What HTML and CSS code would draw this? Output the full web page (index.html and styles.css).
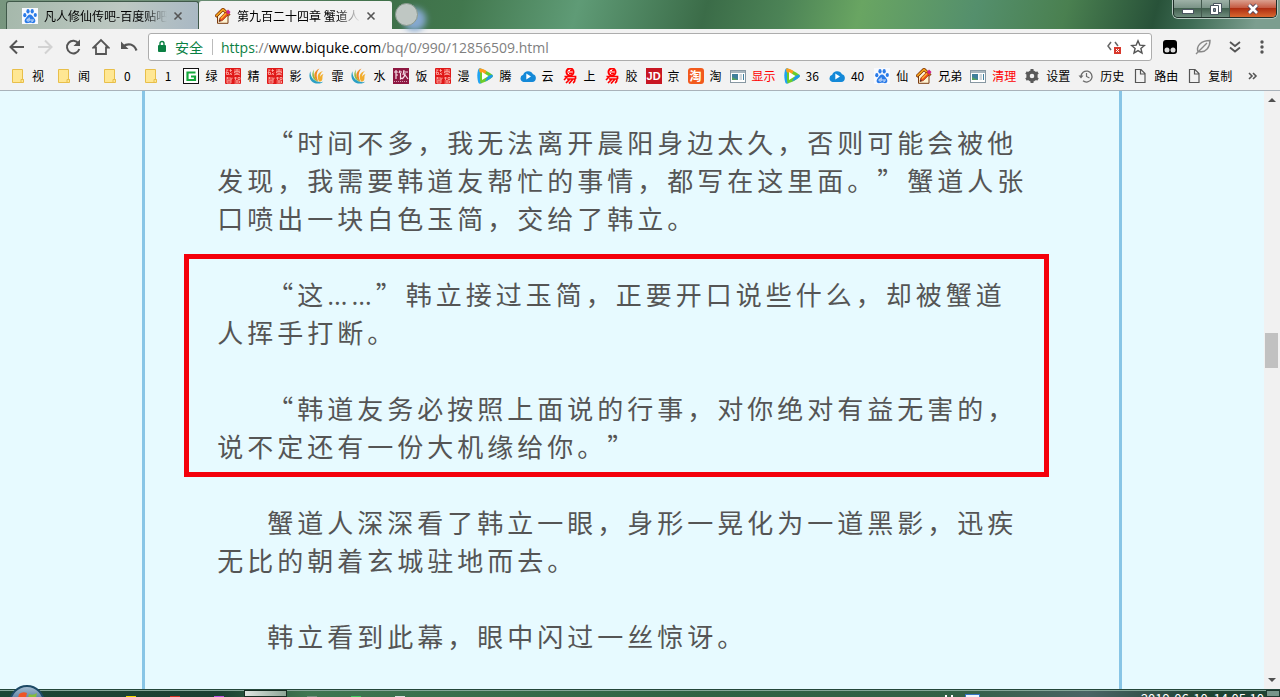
FILE: index.html
```
<!DOCTYPE html>
<html lang="zh-CN">
<head>
  <meta charset="UTF-8">
  <meta name="viewport" content="width=device-width, initial-scale=1.0">
  <title>第九百二十四章 蟹道人</title>
  <link rel="stylesheet" href="styles.css">
</head>
<body>
  <!-- Shared icons -->
  <svg class="sprite" width="0" height="0" aria-hidden="true">
    <symbol id="paw" viewBox="0 0 16 16">
      <rect width="16" height="16" fill="#f8faff"/>
      <g fill="#2a7be8">
        <ellipse cx="2.8" cy="7.2" rx="1.6" ry="2.1"/>
        <ellipse cx="6" cy="3.2" rx="1.6" ry="2.3"/>
        <ellipse cx="10.2" cy="3.2" rx="1.6" ry="2.3"/>
        <ellipse cx="13.3" cy="7" rx="1.6" ry="2.1"/>
        <path d="M8 6.6c2 0 2.6 2 4.200 3.600 2 2 1.300 5-1.200 5-1.200 0-1.800-.4-3-.4s-1.800.4-3 .4c-2.500 0-3.200-3-1.200-5C5.400 8.600 6 6.600 8 6.600z"/>
      </g>
      <path d="M7.200 9.500v3.600H5.900a1 1 0 0 1 0-2h1.300M9 11v1.500q0 .7.700.7H11V11" fill="none" stroke="#fff" stroke-width=".8"/>
    </symbol>
    <symbol id="house" viewBox="0 0 16 16">
      <path d="M2.500 8v7.300h10.500V7L8 2.500z" fill="#fff3d0" stroke="#7a3b10"/>
      <path d="M.5 8.700 8 1.200l6.500 6.300" fill="none" stroke="#7a2c08" stroke-width="3"/>
      <path d="M1 8.200 8 1.500l6 5.700" fill="none" stroke="#f5a51c" stroke-width="1.700"/>
      <path d="m4 13.500.8-3.500 6-6 2.600 2.600-6 6z" fill="#e8501a" stroke="#8c1c08" stroke-width=".6"/>
      <path d="m6 10.500 5-5" stroke="#ffb52c" stroke-width="1.200"/>
      <path d="m11 4 2-2.500L15.500 4l-2 2.500z" fill="#d0208c"/>
      <path d="m4 13.500.5-2 1.500 1.500z" fill="#333"/>
    </symbol>
    <symbol id="folder" viewBox="0 0 16 16">
      <path d="M2.500 1.500h10V11l1 .5v3h-11z" fill="#ffe793" stroke="#e8bf4a"/>
      <path d="M11 14.500v-3h2.500" fill="none" stroke="#e8bf4a"/>
    </symbol>
    <symbol id="green" viewBox="0 0 16 16">
      <rect x=".5" y=".5" width="15" height="15" fill="#fff" stroke="#111"/>
      <path d="M12.500 4.500h-8v7.500h7.500V8.500H8" fill="none" stroke="#16a83c" stroke-width="2.200"/>
    </symbol>
    <symbol id="seal" viewBox="0 0 16 16">
      <rect width="16" height="16" rx="1" fill="#e01818"/>
      <path d="M1 2h2.500M2.500 2 1 5M1.500 4.500h2v2h-2zM4.500 2.500h2.500M5.500 1v3M4.500 7 7 4.500M5 5l2 2M9 2h6M12 1v2M9.500 3.500h5v1.500h-5zM12 5v2M9 7l3-1 3 1M1 10h3M2.500 9v2M1 12h6M5 9v2h2V9.500M2 13h4v2H2zM9 10h3M10.500 9v3M13 9.500h2v2h-2zM9.500 13h5v2h-5M12 12v3" fill="none" stroke="#ffb4ac" stroke-width=".8"/>
    </symbol>
    <symbol id="swirl" viewBox="0 0 16 16">
      <path d="M1.500 3C-1.500 9 2 16 9.500 15.600c2 0 3.500-.8 4.500-1.800C7 15.500 1 10.500 1.500 3z" fill="#2b9fc4"/>
      <path d="M5 1.500C1.500 6.500 3.500 12.500 9.500 14 5.500 10.500 4 6.500 5 1.500z" fill="#91bd45"/>
      <path d="M10.500.5C3.500 3.500 4 10.500 9.500 13.500 7 9 7 4.500 10.500.5z" fill="#f08a22"/>
      <path d="M14 3c-6 1.500-6.500 7-3.500 10.800C15.500 12.500 12 9 14.500 6c-2 .5-3 1.500-3.500 3 0-2.500 1-4.500 3-6z" fill="#f1ad2e"/>
    </symbol>
    <symbol id="meal" viewBox="0 0 16 16">
      <rect width="16" height="16" fill="#8e1741"/>
      <path d="M1 4h4M3 2v9M3 7h2M7 2.500 6 5M6.500 4H9M7.500 5v6l1.500-1M11 2l-1 5M10 4h5M12 5q0 4-3 6M12 7l3 4" fill="none" stroke="#f7dfe7" stroke-width="1.200"/>
      <path d="M1 13.500h14" stroke="#d39bb0" stroke-dasharray="1 1"/>
    </symbol>
    <symbol id="play" viewBox="0 0 16 16">
      <path d="M1.500 1C-.2 5 0 11 1.500 15c.7 1 1.800.9 3 .3L8 8 4.500.7C3.300 0 2.200 0 1.500 1z" fill="#21a4f1"/>
      <path d="M3 .4C8 2 12 4 15 6.500c1.200 1 1.200 2 0 3-3 2.500-6.500 4.600-11.500 6.100L3 12z" fill="#6ccd29"/>
      <path d="M8 13.500c3-1.200 5.500-2.700 7.500-4.500.6-1 .4-1.700-.5-2.500L11 8z" fill="#1e9bea"/>
      <path d="M2 .8C4 0 7 1.500 9.500 3L8 6 2.500 4z" fill="#ff9d1e"/>
      <path d="M5 4v8l6.500-4z" fill="#fff"/>
    </symbol>
    <symbol id="cloud" viewBox="0 0 16 16">
      <path d="M3.500 14a3.700 3.700 0 0 1-.3-7.200A5.300 5.300 0 0 1 13 6.200 4 4 0 0 1 12.300 14z" fill="#1489d8"/>
      <path d="M6.300 5.500v6L11 8.500z" fill="#fff"/>
    </symbol>
    <symbol id="yi" viewBox="0 0 16 16">
      <circle cx="8" cy="4" r="3.500" fill="#fff" stroke="#f00" stroke-width="2"/>
      <path d="M6 4h4M8 2.500h2M7 5.500h3" stroke="#f00"/>
      <path d="M2.500 8.500h11v2.500M6 8 2 12M5 11h8q0 3-2 4M8 11l-4 4M11 11l-4 4.500" fill="none" stroke="#f00" stroke-width="1.700"/>
    </symbol>
    <symbol id="window" viewBox="0 0 16 16">
      <rect x=".5" y="2.500" width="15" height="12" fill="#fff" stroke="#8797a2"/>
      <path d="M1 4h14" stroke="#a9b7bf" stroke-width="2"/>
      <rect x="2" y="6" width="6" height="6" fill="#3f7f9c"/>
      <path d="M2 12V9l6 3z" fill="#54a061"/>
      <path d="M9.500 7h2.500M9.500 9h2.500M9.500 11h2.500" stroke="#a0adb5"/>
      <path d="M13.500 6v6" stroke="#3f7f9c"/>
    </symbol>
    <symbol id="gear" viewBox="0 0 16 16">
      <circle cx="8" cy="8" r="4" fill="none" stroke="#5a5a5a" stroke-width="3.400"/>
      <path d="M8 1v3M8 12v3M2 4.500l2.500 1.500M11.500 10l2.500 1.500M2 11.500 4.500 10M11.500 6 14 4.500" stroke="#5a5a5a" stroke-width="3"/>
    </symbol>
    <symbol id="clock" viewBox="0 0 16 16">
      <path d="M3 8.500a5.500 5.500 0 1 1 2 4.300" fill="none" stroke="#6b6b6b" stroke-width="1.300"/>
      <path d="M.5 7.500h5L3 10.500z" fill="#6b6b6b"/>
      <path d="M8.500 5v3.500l3 1.500" fill="none" stroke="#6b6b6b" stroke-width="1.200"/>
    </symbol>
    <symbol id="file" viewBox="0 0 16 16">
      <path d="M3.500 1.500h5.500l4 4v9H3.500zM8.500 1.500v4.500H13" fill="none" stroke="#555" stroke-width="1.200"/>
    </symbol>
    <symbol id="close" viewBox="0 0 10 10">
      <path d="m1.500 1.500 7 7M8.500 1.500l-7 7" stroke="#555" stroke-width="1.600"/>
    </symbol>
  </svg>

  <header class="titlebar">
    <div class="tab">
      <svg class="icon"><use href="#paw"/></svg>
      <span class="tab-title">凡人修仙传吧-百度贴吧</span>
      <button class="tab-close" aria-label="关闭"><svg><use href="#close"/></svg></button>
    </div>
    <div class="tab active">
      <svg class="icon"><use href="#house"/></svg>
      <span class="tab-title">第九百二十四章 蟹道人</span>
      <button class="tab-close" aria-label="关闭"><svg><use href="#close"/></svg></button>
    </div>
    <button class="new-tab" aria-label="新标签页"></button>
    <div class="window-buttons">
      <button aria-label="最小化">
        <svg width="14" height="14"><rect x="1.500" y="7.500" width="11" height="4" fill="#fff" stroke="#4a5560"/></svg>
      </button>
      <button aria-label="还原">
        <svg width="14" height="14"><path d="M4.500 1.500h8v9h-8z" fill="#fff" stroke="#4a5560"/><path d="M1.500 3.500h8v9h-8z" fill="#fff" stroke="#4a5560"/><path d="M4.500 6.500h2v3h-2z" fill="#789" stroke="#4a5560"/></svg>
      </button>
      <button class="close-window" aria-label="关闭窗口">
        <svg width="14" height="14"><path d="m3 3 8 8M11 3l-8 8" stroke="#50435a" stroke-width="4.500"/><path d="m3 3 8 8M11 3l-8 8" stroke="#fff" stroke-width="2.600"/></svg>
      </button>
    </div>
  </header>

  <nav class="toolbar">
    <button class="tool" aria-label="后退">
      <svg width="18" height="18"><path d="M16 9H3M9 2.500 2.500 9 9 15.500" fill="none" stroke="#555" stroke-width="2"/></svg>
    </button>
    <button class="tool" aria-label="前进">
      <svg width="18" height="18"><path d="M2 9h13M9 2.500 15.500 9 9 15.500" fill="none" stroke="#d2d2d2" stroke-width="2"/></svg>
    </button>
    <button class="tool" aria-label="刷新">
      <svg width="18" height="18"><path d="M14.500 5.500A6.300 6.300 0 1 0 15.300 11" fill="none" stroke="#555" stroke-width="2"/><path d="M16 1.500V8H9.500z" fill="#555"/></svg>
    </button>
    <button class="tool" aria-label="主页">
      <svg width="18" height="18"><path d="M1.500 9.500 9 2l7.500 7.500H14V16H4V9.500z" fill="none" stroke="#555" stroke-width="1.800"/></svg>
    </button>
    <button class="tool" aria-label="撤销">
      <svg width="18" height="18"><path d="M3 8.500C8 4.500 14 6 16.500 12.500" fill="none" stroke="#555" stroke-width="2.200"/><path d="M1 3.500v7.500h7.500z" fill="#555"/></svg>
    </button>
    <div class="address">
      <svg width="10" height="14"><rect x="1" y="5" width="8" height="7" rx="1" fill="#0b8043"/><path d="M3 6V3.500a2 2 0 0 1 4 0V6" fill="none" stroke="#0b8043" stroke-width="1.400"/></svg>
      <span class="secure">安全</span>
      <a class="url" href="#"><span class="scheme">https</span>://<span class="host">www.biquke.com</span>/bq/0/990/12856509.html</a>
      <svg width="16" height="16"><path d="M5 3 2 7l3 4M9 3l3 4" fill="none" stroke="#666" stroke-width="1.500"/><rect x="8" y="8" width="7" height="7" fill="#d9382c"/><path d="m10 10 3 3M13 10l-3 3" stroke="#fff"/></svg>
      <svg width="16" height="16"><path d="m8 1.800 1.800 4.300 4.600.4-3.500 3 1.100 4.500L8 11.600 4 14l1.100-4.500-3.500-3 4.600-.4z" fill="none" stroke="#555" stroke-width="1.400"/></svg>
    </div>
    <button class="tool" aria-label="扩展">
      <svg width="16" height="16"><rect x="1" y="1" width="14" height="14" rx="3" fill="#000"/><circle cx="5" cy="11" r="2.500" fill="#ddd"/><circle cx="11" cy="11" r="2.500" fill="#ddd"/></svg>
    </button>
    <button class="tool" aria-label="羽毛">
      <svg width="16" height="16"><path d="M1 15 12 4M3 13C1 7 6 1.500 15 1.500 15 8 11 14 4 12.500z" fill="none" stroke="#888" stroke-width="1.400"/></svg>
    </button>
    <button class="tool" aria-label="更多扩展">
      <svg width="14" height="14"><path d="m2 2 5 4 5-4M2 7.500l5 4 5-4" fill="none" stroke="#555" stroke-width="1.800"/></svg>
    </button>
    <button class="tool" aria-label="菜单">
      <svg width="6" height="16"><g fill="#555"><circle cx="3" cy="3" r="1.700"/><circle cx="3" cy="8" r="1.700"/><circle cx="3" cy="13" r="1.700"/></g></svg>
    </button>
  </nav>

  <nav class="bookmarks">
    <a class="folder" href="#"><svg class="icon"><use href="#folder"/></svg>视</a>
    <a class="folder" href="#"><svg class="icon"><use href="#folder"/></svg>闻</a>
    <a class="folder" href="#"><svg class="icon"><use href="#folder"/></svg>0</a>
    <a class="folder" href="#"><svg class="icon"><use href="#folder"/></svg>1</a>
    <a href="#"><svg class="icon"><use href="#green"/></svg>绿</a>
    <a href="#"><svg class="icon"><use href="#seal"/></svg>精</a>
    <a href="#"><svg class="icon"><use href="#seal"/></svg>影</a>
    <a href="#"><svg class="icon"><use href="#swirl"/></svg>霏</a>
    <a href="#"><svg class="icon"><use href="#swirl"/></svg>水</a>
    <a href="#"><svg class="icon"><use href="#meal"/></svg>饭</a>
    <a href="#"><svg class="icon"><use href="#seal"/></svg>漫</a>
    <a href="#"><svg class="icon"><use href="#play"/></svg>腾</a>
    <a href="#"><svg class="icon"><use href="#cloud"/></svg>云</a>
    <a href="#"><svg class="icon"><use href="#yi"/></svg>上</a>
    <a href="#"><svg class="icon"><use href="#yi"/></svg>胶</a>
    <a href="#"><span class="icon jd">JD</span>京</a>
    <a href="#"><span class="icon tao">淘</span>淘</a>
    <a class="red" href="#"><svg class="icon"><use href="#window"/></svg>显示</a>
    <a class="number" href="#"><svg class="icon"><use href="#play"/></svg>36</a>
    <a class="number" href="#"><svg class="icon"><use href="#cloud"/></svg>40</a>
    <a href="#"><svg class="icon"><use href="#paw"/></svg>仙</a>
    <a href="#"><svg class="icon"><use href="#house"/></svg>兄弟</a>
    <a class="red" href="#"><svg class="icon"><use href="#window"/></svg>清理</a>
    <a href="#"><svg class="icon"><use href="#gear"/></svg>设置</a>
    <a href="#"><svg class="icon"><use href="#clock"/></svg>历史</a>
    <a href="#"><svg class="icon"><use href="#file"/></svg>路由</a>
    <a href="#"><svg class="icon"><use href="#file"/></svg>复制</a>
    <button class="more" aria-label="更多书签">
      <svg width="10" height="10"><path d="m1 2 3 3-3 3M5 2l3 3-3 3" fill="none" stroke="#555" stroke-width="1.600"/></svg>
    </button>
  </nav>

  <div class="viewport">
    <main class="page">
      <article class="chapter">
        <p>“时间不多，我无法离开晨阳身边太久，否则可能会被他发现，我需要韩道友帮忙的事情，都写在这里面。”蟹道人张口喷出一块白色玉简，交给了韩立。</p>
        <div class="marked">
          <p>“这<span class="dots">……</span>”韩立接过玉简，正要开口说些什么，却被蟹道人挥手打断。</p>
          <p>“韩道友务必按照上面说的行事，对你绝对有益无害的，说不定还有一份大机缘给你。”</p>
        </div>
        <p>蟹道人深深看了韩立一眼，身形一晃化为一道黑影，迅疾无比的朝着玄城驻地而去。</p>
        <p>韩立看到此幕，眼中闪过一丝惊讶。</p>
      </article>
    </main>
    <div class="scrollbar">
      <button aria-label="向上滚动"><svg width="8" height="4"><path d="M0 4 4 0l4 4z" fill="#505050"/></svg></button>
      <div class="track"><div class="thumb"></div></div>
      <button aria-label="向下滚动"><svg width="8" height="4"><path d="m0 0 4 4 4-4z" fill="#505050"/></svg></button>
    </div>
  </div>

  <footer class="taskbar">
    <button class="start" aria-label="开始">
      <svg width="38" height="38">
        <defs><linearGradient id="orb" x2="0" y2="1"><stop offset="0" stop-color="#a9bfd2"/><stop offset=".5" stop-color="#406a95"/></linearGradient></defs>
        <circle cx="19" cy="19" r="17" fill="url(#orb)" stroke="#1d4a66" stroke-width="2"/>
        <path d="M11 10q4-3 8-1l-2 8q-4-2-8 1z" fill="#ee5426"/>
        <path d="M21 10q4 2 8-1l-2 8q-4 3-8 1z" fill="#84bd3c"/>
      </svg>
    </button>
    <div class="task-icons">
      <i class="yellow"></i><i class="crimson"></i><i class="purple"></i>
      <button class="task" aria-label="浏览器"></button>
      <i class="gray"></i><i class="lime"></i><i class="white"></i>
    </div>
    <div class="tray">
      <span class="tray-mark"></span>
      <span class="tray-icon"></span>
      <time>2019-06-10&nbsp; 14:05:10</time>
      <button class="show-desktop" aria-label="显示桌面"></button>
    </div>
  </footer>
</body>
</html>
```
FILE: styles.css
```
* {
  box-sizing: border-box;
}

body {
  display: flex;
  flex-direction: column;
  height: 100vh;
  margin: 0;
  overflow: hidden;
  background: #f2f2f2;
  color: #000;
  font-family: "Noto Sans CJK SC", sans-serif;
  font-size: 12px;
}

button {
  padding: 0;
  border: none;
  background: none;
}

a {
  color: inherit;
  text-decoration: none;
}

svg {
  display: block;
  flex: none;
}

.sprite {
  position: absolute;
}

.icon {
  width: 16px;
  height: 16px;
}

/* Tabs */
.titlebar {
  display: flex;
  flex: none;
  height: 29px;
  padding-left: 6px;
  background: linear-gradient(105deg, #78967f 0, #6f9078 14%, #3f7049 30%, #42784e 36%, #5f9b76 45%, #3b6c48 55%, #4c8356 61%, #69a562 67%, #548f6c 76%, #4a8050 83%, #285239 90%, #3f6c55 93%, #7c9e8f 98%);
}

.tab {
  display: flex;
  align-items: center;
  width: 193px;
  margin-top: 1px;
  padding: 0 15px;
  gap: 6px;
  border: 1px solid #40594a;
  border-bottom: none;
  border-radius: 3px 3px 0 0;
  background: linear-gradient(100deg, #a5b8ab, #bdc8c2 60%, #a9b8c4);
}

.tab.active {
  background: #f2f2f2;
  border-color: #f2f2f2;
}

.tab-title {
  flex: 1;
  overflow: hidden;
  white-space: nowrap;
  mask-image: linear-gradient(to right, #000 82%, transparent);
}

.tab-close svg {
  width: 10px;
  height: 10px;
}

.new-tab {
  width: 23px;
  height: 23px;
  margin: 3px 0 0 3px;
  border: 1px solid #8b9a90;
  border-radius: 50%;
  background: #bfc7c3;
  box-shadow: 8px 5px 6px #86a9d0;
}

.window-buttons {
  display: flex;
  height: 18px;
  margin: 0 3px 0 auto;
  border: 1px solid #1e2d28;
  border-top: none;
  border-radius: 0 0 5px 5px;
  box-shadow: 0 0 0 1px #b5c8bf;
  overflow: hidden;
}

.window-buttons button {
  display: flex;
  align-items: center;
  justify-content: center;
  width: 28px;
  border-right: 1px solid #43594e;
  background: linear-gradient(#9eb1a7, #7b9488 45%, #42604f 50%, #6f8c7d);
}

.window-buttons .close-window {
  width: 46px;
  border-right: none;
  background: linear-gradient(#dba08f, #c55b43 45%, #af2e12 50%, #d8672f);
}

/* Toolbar */
.toolbar {
  display: flex;
  flex: none;
  align-items: center;
  height: 36px;
  padding: 0 15px 0 8px;
  gap: 10px;
}

.tool {
  display: flex;
  justify-content: center;
  min-width: 18px;
}

.toolbar .address ~ .tool {
  min-width: 6px;
}

.toolbar .address ~ .tool + .tool {
  margin-left: 7px;
}

.address {
  display: flex;
  flex: 1;
  align-items: center;
  height: 28px;
  padding: 0 5px 0 8px;
  gap: 8px;
  border: 1px solid #adadad;
  border-radius: 3px;
  background: #fff;
}

.secure {
  padding-right: 9px;
  border-right: 1px solid #bbb;
  color: #0b8043;
  font-size: 14px;
  line-height: 16px;
}

.url {
  flex: 1;
  color: #808080;
  font-family: "Open Sans", sans-serif;
  font-size: 14px;
}

.scheme {
  color: #0b8043;
}

.host {
  color: #000;
}

/* Bookmarks */
.bookmarks {
  display: flex;
  flex: none;
  align-items: center;
  height: 26px;
  padding: 0 22px 4px 10px;
  gap: 8px;
  border-bottom: 1px solid #a9b2ba;
  white-space: nowrap;
}

.bookmarks a {
  display: flex;
  align-items: center;
  gap: 6px;
}

.bookmarks .folder {
  padding-right: 4px;
}

.bookmarks .number {
  padding-right: 2px;
}

.bookmarks .red {
  color: #f00;
}

.more {
  margin-left: auto;
}

.jd,
.tao {
  color: #fff;
  font-weight: bold;
  line-height: 16px;
  text-align: center;
}

.jd {
  background: #c81623;
  font-family: "Liberation Sans", sans-serif;
  font-size: 11px;
}

.tao {
  border-radius: 3px;
  background: #f25a1c;
}

/* Page */
.viewport {
  display: flex;
  flex: 1;
  min-height: 0;
}

.page {
  flex: 1;
  overflow: hidden;
  background: #e7faff;
}

.chapter {
  width: 77.5%;
  min-height: 100%;
  margin: 0 auto;
  padding: 32px 86px 0 72px;
  border: solid #88c5e6;
  border-width: 0 3px;
  color: #555;
  font-size: 26px;
  letter-spacing: 4px;
  line-height: 38px;
  text-spacing-trim: space-all;
}

.chapter p {
  margin: 0 0 38px;
  text-indent: 50px;
}

.dots {
  font-family: "Open Sans", sans-serif;
  line-height: 1;
}

/* Red frame around the passage */
.marked {
  position: relative;
}

.marked::before {
  content: "";
  position: absolute;
  inset: -21px -16px -12px -33px;
  border: 5px solid #f4000b;
}

.scrollbar {
  display: flex;
  flex-direction: column;
  width: 16px;
  background: #f1f1f1;
}

.scrollbar button {
  display: flex;
  align-items: center;
  justify-content: center;
  height: 18px;
}

.track {
  flex: 1;
  padding: 224px 2px 0 1px;
}

.thumb {
  height: 35px;
  background: #c1c1c1;
}

/* Taskbar */
.taskbar {
  display: flex;
  flex: none;
  position: relative;
  height: 8px;
  border-top: 1px solid #24463a;
  background: linear-gradient(to right, #1c4634, #1b4032 17%, #3f7651 24%, #2f6243 55%, #336046 75%, #4b6465 85%, #1f4334 94%);
  box-shadow: inset 0 1px #86a79a;
}

.start {
  position: absolute;
  left: 8px;
  top: -6px;
}

.task-icons {
  display: flex;
  align-items: flex-end;
  margin-left: 126px;
  gap: 34px;
}

.task-icons i {
  width: 10px;
  height: 1px;
}

.task {
  align-self: stretch;
  width: 43px;
  margin: 0 -14px;
  border: 1px solid #172d23;
  background: linear-gradient(to right, #dfe5e1, #8ea697);
}

.yellow { background: #f5d800; }
.crimson { background: #d03020; }
.purple { background: #b850e0; }
.gray { background: #789080; }
.lime { background: #40c860; }
.white { background: #ddd; }

.tray {
  display: flex;
  margin-left: auto;
  overflow: hidden;
  color: #fff;
}

.tray-mark {
  align-self: flex-end;
  width: 8px;
  height: 2px;
  margin-right: 12px;
  border: solid #fff;
  border-width: 0 2px;
}

.tray-icon {
  width: 15px;
  height: 8px;
  margin: 4px 161px 0 0;
  border: 1px solid #3475c4;
  background: #eef5fc;
}

.tray time {
  font-size: 13px;
  line-height: 18px;
}

.show-desktop {
  width: 14px;
  margin-left: 2px;
  border: 1px solid #20392f;
  background: #78958a;
}
```
